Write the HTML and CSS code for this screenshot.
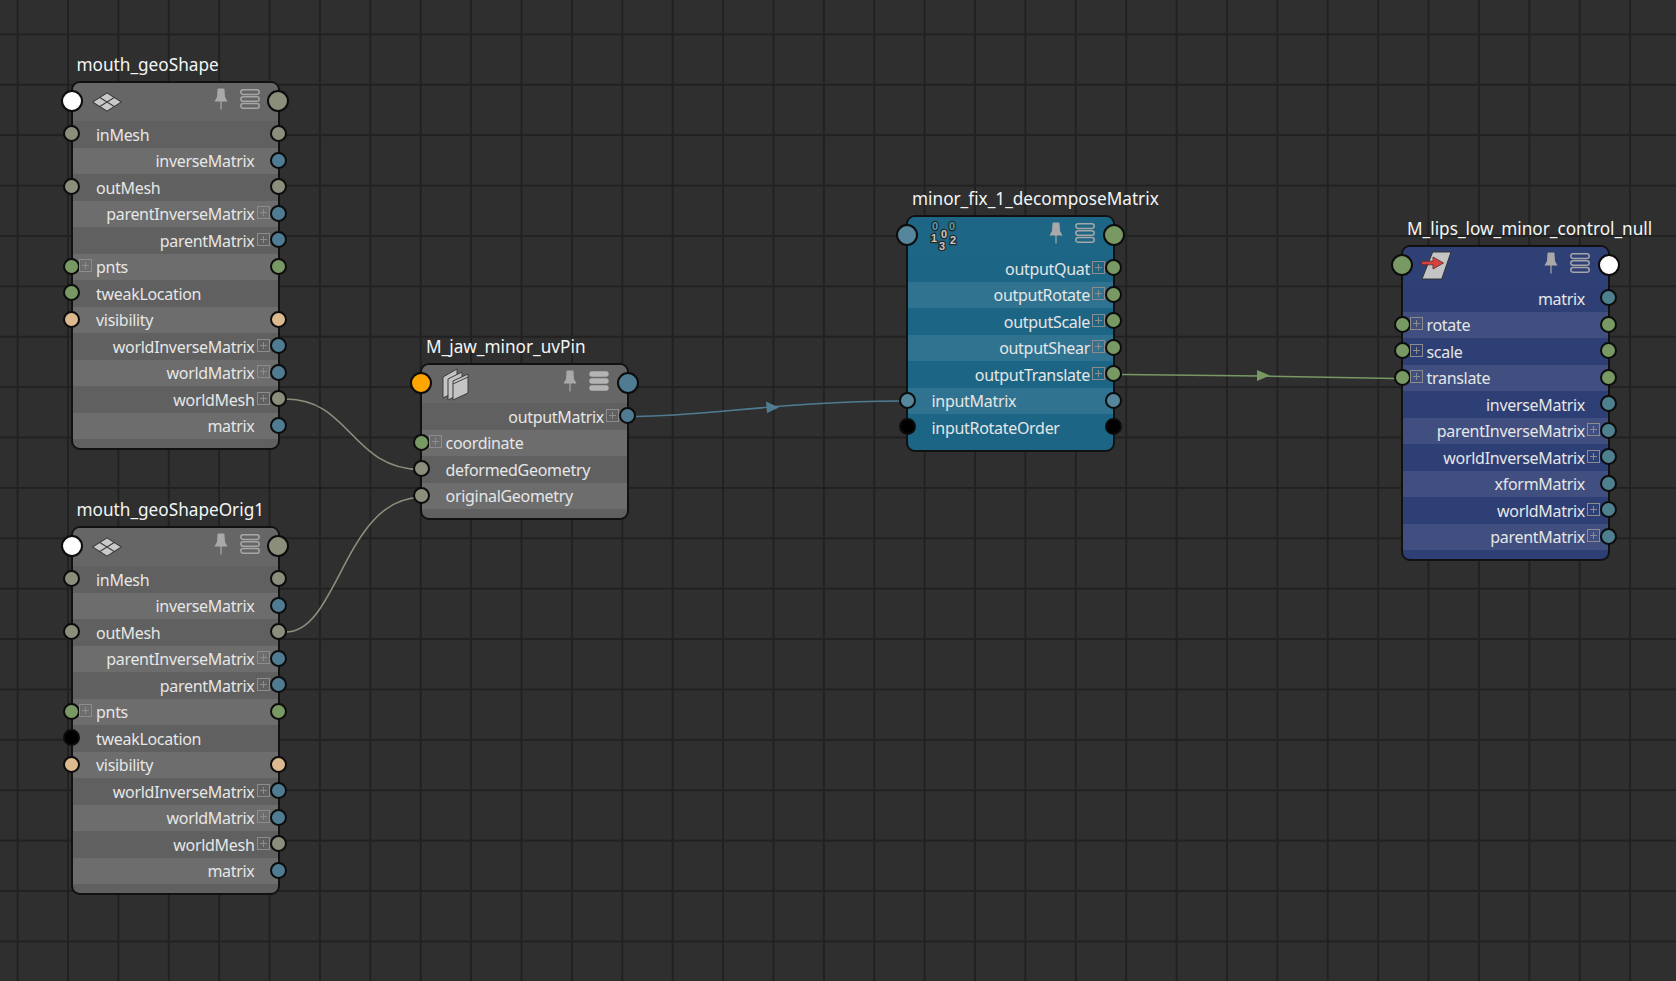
FILE: index.html
```html
<!DOCTYPE html>
<html lang="en">
<head>
    <meta charset="UTF-8">
    <title>Node Editor</title>
    <link rel="stylesheet" href="styles.css">
</head>
<body>
    <svg class="defs" width="0" height="0">
        <symbol id="pin" viewBox="0 0 14 22">
            <path d="M3.5 1.5 Q3.5 0.5 4.5 0.5 H9.5 Q10.5 0.5 10.5 1.5 L11 9 L13.5 13.5 H7.6 V21.5 H6.4 V13.5 H0.5 L3 9 Z" fill="#a9a9a9"/>
        </symbol>
        <symbol id="stack" viewBox="0 0 20 20">
            <rect x="0.8" y="0.8" width="18.4" height="4.6" rx="2.3" fill="none" stroke="#a6a6a6" stroke-width="1.5"/>
            <rect x="0.8" y="7.7" width="18.4" height="4.6" rx="2.3" fill="none" stroke="#a6a6a6" stroke-width="1.5"/>
            <rect x="0.8" y="14.6" width="18.4" height="4.6" rx="2.3" fill="none" stroke="#a6a6a6" stroke-width="1.5"/>
        </symbol>
        <symbol id="stack-solid" viewBox="0 0 20 20">
            <rect x="0.3" y="0.3" width="19.4" height="5.4" rx="2.7" fill="#b4b4b4"/>
            <rect x="0.3" y="7.3" width="19.4" height="5.4" rx="2.7" fill="#b4b4b4"/>
            <rect x="0.3" y="14.3" width="19.4" height="5.4" rx="2.7" fill="#b4b4b4"/>
        </symbol>
        <symbol id="mesh" viewBox="0 0 28 18">
            <path d="M14 0.5 L27.5 9 L14 17.5 L0.5 9 Z" fill="#c9c9c9" stroke="#3c3c3c" stroke-width="1"/>
            <path d="M7.25 4.75 L20.75 13.25 M20.75 4.75 L7.25 13.25" fill="none" stroke="#3c3c3c" stroke-width="1"/>
        </symbol>
    </svg>

    <svg class="wires" width="1676" height="981">
        <path class="wire olive-wire" d="M286 399 C350 399 352 469.5 421 469.5"/>
        <path class="wire olive-wire" d="M286 632 C338 632 345 497.5 421 497.5"/>
        <path class="wire blue-wire" d="M636 416.5 C700 416.5 790 401 900 401"/>
        <polygon class="blue-head" points="766,401.5 779,407.5 767,413"/>
        <path class="wire green-wire" d="M1122 374.5 L1260 376 L1395 378.5"/>
        <polygon class="green-head" points="1257,370 1270,375.5 1257,381"/>
    </svg>

    <div class="node n1">
        <div class="title">mouth_geoShape</div>
        <div class="box grey">
            <div class="head">
                <i class="plug in white"></i>
                <svg class="kind mesh-icon"><use href="#mesh"/></svg>
                <svg class="pin"><use href="#pin"/></svg>
                <svg class="stack"><use href="#stack"/></svg>
                <i class="plug out olive"></i>
            </div>
            <div class="row"><i class="sock in olive"></i><span>inMesh</span><i class="sock out olive"></i></div>
            <div class="row right"><span>inverseMatrix</span><i class="sock out blue"></i></div>
            <div class="row"><i class="sock in olive"></i><span>outMesh</span><i class="sock out olive"></i></div>
            <div class="row right"><span>parentInverseMatrix</span><i class="plus"></i><i class="sock out blue"></i></div>
            <div class="row right"><span>parentMatrix</span><i class="plus"></i><i class="sock out blue"></i></div>
            <div class="row"><i class="sock in green"></i><i class="plus"></i><span>pnts</span><i class="sock out green"></i></div>
            <div class="row"><i class="sock in green"></i><span>tweakLocation</span></div>
            <div class="row"><i class="sock in tan"></i><span>visibility</span><i class="sock out tan"></i></div>
            <div class="row right"><span>worldInverseMatrix</span><i class="plus"></i><i class="sock out blue"></i></div>
            <div class="row right"><span>worldMatrix</span><i class="plus"></i><i class="sock out blue"></i></div>
            <div class="row right"><span>worldMesh</span><i class="plus"></i><i class="sock out olive"></i></div>
            <div class="row right"><span>matrix</span><i class="sock out blue"></i></div>
        </div>
    </div>

    <div class="node n2">
        <div class="title">mouth_geoShapeOrig1</div>
        <div class="box grey">
            <div class="head">
                <i class="plug in white"></i>
                <svg class="kind mesh-icon"><use href="#mesh"/></svg>
                <svg class="pin"><use href="#pin"/></svg>
                <svg class="stack"><use href="#stack"/></svg>
                <i class="plug out olive"></i>
            </div>
            <div class="row"><i class="sock in olive"></i><span>inMesh</span><i class="sock out olive"></i></div>
            <div class="row right"><span>inverseMatrix</span><i class="sock out blue"></i></div>
            <div class="row"><i class="sock in olive"></i><span>outMesh</span><i class="sock out olive"></i></div>
            <div class="row right"><span>parentInverseMatrix</span><i class="plus"></i><i class="sock out blue"></i></div>
            <div class="row right"><span>parentMatrix</span><i class="plus"></i><i class="sock out blue"></i></div>
            <div class="row"><i class="sock in green"></i><i class="plus"></i><span>pnts</span><i class="sock out green"></i></div>
            <div class="row"><i class="sock in black"></i><span>tweakLocation</span></div>
            <div class="row"><i class="sock in tan"></i><span>visibility</span><i class="sock out tan"></i></div>
            <div class="row right"><span>worldInverseMatrix</span><i class="plus"></i><i class="sock out blue"></i></div>
            <div class="row right"><span>worldMatrix</span><i class="plus"></i><i class="sock out blue"></i></div>
            <div class="row right"><span>worldMesh</span><i class="plus"></i><i class="sock out olive"></i></div>
            <div class="row right"><span>matrix</span><i class="sock out blue"></i></div>
        </div>
    </div>

    <div class="node n3">
        <div class="title">M_jaw_minor_uvPin</div>
        <div class="box grey">
            <div class="head">
                <i class="plug in orange"></i>
                <svg class="kind pages-icon" viewBox="0 0 28 33">
                    <g fill="#c4c4c4" stroke="#3c3c3c" stroke-width="1">
                        <path d="M1 9 L15 1 V23 L1 30 Z"/>
                        <path d="M6 11 L20 4 V25 L6 32 Z"/>
                        <path d="M11 13 L26 6 V25 L11 32 Z"/>
                    </g>
                    <path d="M11 16 L26 9" stroke="#444" stroke-width="1" fill="none"/>
                </svg>
                <svg class="pin"><use href="#pin"/></svg>
                <svg class="stack"><use href="#stack-solid"/></svg>
                <i class="plug out blue"></i>
            </div>
            <div class="row right"><span>outputMatrix</span><i class="plus"></i><i class="sock out blue"></i></div>
            <div class="row"><i class="sock in green"></i><i class="plus"></i><span>coordinate</span></div>
            <div class="row"><i class="sock in olive"></i><span>deformedGeometry</span></div>
            <div class="row"><i class="sock in olive"></i><span>originalGeometry</span></div>
        </div>
    </div>

    <div class="node n4">
        <div class="title">minor_fix_1_decomposeMatrix</div>
        <div class="box teal">
            <div class="head">
                <i class="plug in sky"></i>
                <svg class="kind digits-icon" viewBox="0 0 30 32">
                    <text x="7" y="11" class="digit cold">0</text>
                    <text x="24" y="11" class="digit cold">0</text>
                    <text x="6" y="23" class="digit">1</text>
                    <text x="16" y="19" class="digit">0</text>
                    <text x="25" y="25" class="digit">2</text>
                    <text x="14" y="31" class="digit">3</text>
                </svg>
                <svg class="pin"><use href="#pin"/></svg>
                <svg class="stack"><use href="#stack"/></svg>
                <i class="plug out green"></i>
            </div>
            <div class="row right"><span>outputQuat</span><i class="plus"></i><i class="sock out green"></i></div>
            <div class="row right"><span>outputRotate</span><i class="plus"></i><i class="sock out green"></i></div>
            <div class="row right"><span>outputScale</span><i class="plus"></i><i class="sock out green"></i></div>
            <div class="row right"><span>outputShear</span><i class="plus"></i><i class="sock out green"></i></div>
            <div class="row right"><span>outputTranslate</span><i class="plus"></i><i class="sock out green"></i></div>
            <div class="row"><i class="sock in sky"></i><span>inputMatrix</span><i class="sock out sky"></i></div>
            <div class="row"><i class="sock in black"></i><span>inputRotateOrder</span><i class="sock out black"></i></div>
        </div>
    </div>

    <div class="node n5">
        <div class="title">M_lips_low_minor_control_null</div>
        <div class="box navy">
            <div class="head">
                <i class="plug in green"></i>
                <svg class="kind null-icon" viewBox="0 0 32 30">
                    <path d="M12.7 1 H31 L21.7 28 H2 Z" fill="#c4c4c4" stroke="#333" stroke-width="1"/>
                    <path d="M1.5 10.2 H13 V6 L23.5 12 L13 18 V13.8 H1.5 Z" fill="#d8403f" stroke="#5a2a2a" stroke-width="0.8"/>
                </svg>
                <svg class="pin"><use href="#pin"/></svg>
                <svg class="stack"><use href="#stack"/></svg>
                <i class="plug out white"></i>
            </div>
            <div class="row right"><span>matrix</span><i class="sock out slate"></i></div>
            <div class="row"><i class="sock in green"></i><i class="plus"></i><span>rotate</span><i class="sock out green"></i></div>
            <div class="row"><i class="sock in green"></i><i class="plus"></i><span>scale</span><i class="sock out green"></i></div>
            <div class="row"><i class="sock in green"></i><i class="plus"></i><span>translate</span><i class="sock out green"></i></div>
            <div class="row right"><span>inverseMatrix</span><i class="sock out slate"></i></div>
            <div class="row right"><span>parentInverseMatrix</span><i class="plus"></i><i class="sock out slate"></i></div>
            <div class="row right"><span>worldInverseMatrix</span><i class="plus"></i><i class="sock out slate"></i></div>
            <div class="row right"><span>xformMatrix</span><i class="sock out slate"></i></div>
            <div class="row right"><span>worldMatrix</span><i class="plus"></i><i class="sock out slate"></i></div>
            <div class="row right"><span>parentMatrix</span><i class="plus"></i><i class="sock out slate"></i></div>
        </div>
    </div>
</body>
</html>
```

FILE: styles.css
```css
html, body {
    margin: 0;
    height: 100%;
}

body {
    position: relative;
    width: 1676px;
    height: 981px;
    overflow: hidden;
    background-color: #2f2f2f;
    background-image:
        linear-gradient(90deg, #212121 2px, transparent 2px),
        linear-gradient(#212121 2px, transparent 2px);
    background-size: 50.4px 50.4px;
    background-position: 16.6px 33.4px;
    color: #e6e6e6;
    font-family: "Noto Sans", "Open Sans", sans-serif;
    font-size: 16px;
    letter-spacing: -0.3px;
}

.defs {
    position: absolute;
}

/* wires lie under the nodes */
.wires {
    position: absolute;
    left: 0;
    top: 0;
}

.wire {
    fill: none;
    stroke-width: 1.6;
}

.olive-wire { stroke: #8d8f7d; }
.blue-wire { stroke: #4f7c93; }
.green-wire { stroke: #789963; }
.blue-head { fill: #4f7c93; }
.green-head { fill: #789963; }

/* nodes sit on a free canvas */
.node {
    position: absolute;
    width: 209px;
}

.n1 { left: 70.5px; top: 53px; }
.n2 { left: 70.5px; top: 498px; }
.n3 { left: 420px; top: 335px; }
.n4 { left: 906px; top: 187px; }
.n5 { left: 1401px; top: 217px; }

.title {
    height: 28px;
    padding-left: 6px;
    line-height: 24px;
    font-size: 17.2px;
    letter-spacing: 0;
    color: #f2f6f8;
    white-space: nowrap;
}

.box {
    padding-bottom: 9px;
    border: 2px solid #111;
    border-radius: 9px;
    background: var(--dark);
}

.grey { --dark: #606060; --light: #6d6d6d; --top: #666; }
.teal { --dark: #1c6584; --light: #2f7390; --top: #1d6685; }
.navy { --dark: #2e3f75; --light: #404f80; --top: #2f4077; }

.head {
    position: relative;
    display: flex;
    align-items: flex-start;
    height: 38px;
    padding: 6px 18px 0 20px;
    box-sizing: border-box;
    border-radius: 7px 7px 0 0;
    background: var(--top);
}

.kind {
    margin-right: auto;
}

.mesh-icon {
    width: 30px;
    height: 20px;
    margin: 3px auto 0 -1px;
}

.pages-icon {
    width: 28px;
    height: 33px;
    margin: -3px auto 0 0;
}

.digits-icon {
    width: 30px;
    height: 32px;
    margin: -4px auto 0 0;
}

.null-icon {
    width: 32px;
    height: 30px;
    margin: -2px auto 0 -3px;
}

.digit {
    font-family: "Liberation Sans", sans-serif;
    font-size: 11px;
    font-weight: bold;
    text-anchor: middle;
    fill: #c8c8c8;
    stroke: #262626;
    stroke-width: 2.4px;
    paint-order: stroke;
}

.digit.cold {
    fill: #4aa0b4;
}

.pin {
    width: 14px;
    height: 22px;
    margin: -1px 12px 0 0;
}

.stack {
    width: 20px;
    height: 20px;
}

.row {
    position: relative;
    display: flex;
    align-items: center;
    height: 26.5px;
    padding: 1px 23px 0 23.5px;
    box-sizing: border-box;
    white-space: nowrap;
}

.row:nth-child(odd) {
    background: var(--light);
}

.row.right {
    justify-content: flex-end;
}

.plus {
    position: relative;
    flex: none;
    width: 11px;
    height: 11px;
    border: 1px solid #8c8c8c;
    margin: -3px 4px 0 -17px;
}

.right .plus {
    margin: -3px -15px 0 2px;
}

.plus::before,
.plus::after {
    content: "";
    position: absolute;
    background: #8c8c8c;
}

.plus::before {
    left: 2px;
    right: 2px;
    top: 5px;
    height: 1px;
}

.plus::after {
    top: 2px;
    bottom: 2px;
    left: 5px;
    width: 1px;
}

/* sockets hang over the node's edge */
.sock,
.plug {
    position: absolute;
    box-sizing: border-box;
    border: 2px solid #0c0c0c;
    border-radius: 50%;
}

.sock {
    top: 50%;
    width: 17px;
    height: 17px;
    margin-top: -9px;
}

.sock.in { left: -9.5px; }
.sock.out { right: -9px; }

.plug {
    top: 7px;
    width: 22px;
    height: 22px;
}

.plug.in { left: -12px; }
.plug.out { right: -11.5px; }

.white { background: #fff; }
.olive { background: #8c8e7c; }
.blue { background: #4f7c93; }
.sky { background: #55869c; }
.slate { background: #4e808f; }
.green { background: #789963; }
.tan { background: #dcb98e; }
.orange { background: #ffa500; }
.black { background: #000; }
```
